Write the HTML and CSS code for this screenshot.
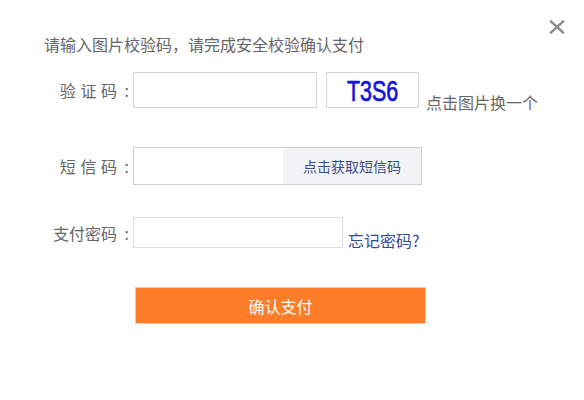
FILE: index.html
```html
<!DOCTYPE html>
<html lang="zh-CN">
<head>
<meta charset="utf-8">
<title>安全校验</title>
<link rel="stylesheet" href="styles.css">
</head>
<body>
<div class="dialog">
  <a class="close" href="#" aria-label="关闭">
    <svg width="16" height="14" viewBox="0 0 16 14"><path d="M2 1.5 L14 12.5 M14 1.5 L2 12.5" stroke="#8c8c8c" stroke-width="2.4" stroke-linecap="square" fill="none"/></svg>
  </a>
  <div class="title">请输入图片校验码，请完成安全校验确认支付</div>
  <div class="row row-captcha">
    <label class="label">验 证 码<span class="colon">:</span></label>
    <input class="field field-captcha" type="text">
    <div class="captcha"><span class="captcha-text">T3S6</span></div>
    <span class="hint">点击图片换一个</span>
  </div>
  <div class="row row-sms">
    <label class="label">短 信 码<span class="colon">:</span></label>
    <div class="sms-box">
      <input class="field field-sms" type="text">
      <button class="sms-btn" type="button">点击获取短信码</button>
    </div>
  </div>
  <div class="row row-pwd">
    <label class="label">支付密码<span class="colon">:</span></label>
    <input class="field field-pwd" type="password">
    <a class="forget" href="#">忘记密码?</a>
  </div>
  <button class="submit" type="button">确认支付</button>
</div>
</body>
</html>
```

FILE: styles.css
```css
html, body {
  margin: 0;
  padding: 0;
  background: #fff;
}
.dialog {
  position: relative;
  width: 584px;
  height: 400px;
  box-sizing: border-box;
  padding: 35px 0 0 44px;
  font-family: "Noto Sans CJK SC", "Microsoft YaHei", sans-serif;
  color: #666;
  display: flex;
  flex-direction: column;
  align-items: flex-start;
}
.close {
  position: absolute;
  top: 20px;
  right: 19px;
  display: block;
  line-height: 0;
}
.title {
  font-size: 16px;
  line-height: 18px;
  color: #666;
}
.row {
  display: flex;
  align-items: flex-end;
}
.label {
  width: 85px;
  padding-right: 4px;
  text-align: right;
  font-size: 16px;
  line-height: 20px;
  color: #666;
  align-self: center;
  white-space: pre;
  word-spacing: 1px;
}
.colon {
  display: inline-block;
  width: 12px;
  text-align: right;
}
.field {
  box-sizing: border-box;
  margin: 0;
  padding: 0 8px;
  border: 1px solid #d8d8d8;
  background: #fff;
  outline: none;
  font-size: 14px;
}
.row-captcha {
  margin-top: 19px;
}
.field-captcha {
  width: 184px;
  height: 36px;
}
.captcha {
  box-sizing: border-box;
  width: 93px;
  height: 36px;
  margin-left: 9px;
  border: 1px solid #d8d8d8;
  display: flex;
  align-items: center;
  justify-content: center;
}
.captcha-text {
  display: inline-block;
  font-family: "Liberation Sans", Arial, sans-serif;
  font-weight: normal;
  font-size: 29px;
  line-height: 28px;
  color: #1414d6;
  -webkit-text-stroke: 0.7px #1414d6;
  transform: scaleX(0.74);
  margin-top: 2px;
}
.hint {
  margin-left: 7px;
  font-size: 16px;
  line-height: 18px;
  margin-bottom: -3px;
  color: #666;
}
.row-sms {
  margin-top: 39px;
}
.sms-box {
  box-sizing: border-box;
  width: 289px;
  height: 38px;
  border: 1px solid #cfcfcf;
  display: flex;
}
.field-sms {
  border: none;
  width: 149px;
  height: 36px;
}
.sms-btn {
  flex: 1;
  margin: 0;
  border: none;
  padding: 0;
  background: #f3f4f6;
  color: #3a4a8f;
  font-family: "Noto Sans CJK SC", "Microsoft YaHei", sans-serif;
  font-size: 14px;
  cursor: pointer;
}
.row-pwd {
  margin-top: 32px;
}
.field-pwd {
  width: 210px;
  height: 31px;
  border-color: #dedede;
}
.forget {
  margin-left: 5px;
  margin-bottom: -1px;
  font-size: 16px;
  line-height: 18px;
  color: #34489a;
  text-decoration: none;
}
.submit {
  margin: 39px 0 0 91px;
  box-sizing: border-box;
  width: 291px;
  height: 37px;
  border: 1px solid #d6d0cc;
  background: #ff7d28;
  color: #fff;
  font-family: "Noto Sans CJK SC", "Microsoft YaHei", sans-serif;
  font-size: 16px;
  padding: 0;
  cursor: pointer;
}
```
